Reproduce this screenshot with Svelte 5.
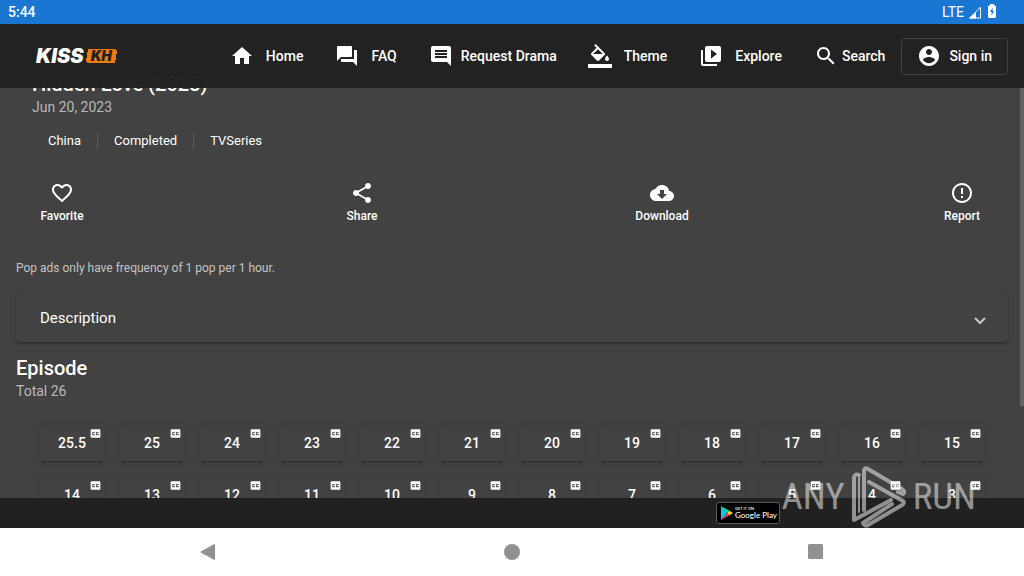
<script lang="ts">
  const navItems = [
    { label: 'Home', path: 'M10 20v-6h4v6h5v-8h3L12 3 2 12h3v8z' },
    {
      label: 'FAQ',
      path: 'M21 6h-2v9H6v2c0 .55.45 1 1 1h11l4 4V7c0-.55-.45-1-1-1zm-4 6V3c0-.55-.45-1-1-1H3c-.55 0-1 .45-1 1v14l4-4h10c.55 0 1-.45 1-1z'
    },
    {
      label: 'Request Drama',
      tight: true,
      path: 'M21.99 4c0-1.1-.89-2-1.99-2H4c-1.1 0-2 .9-2 2v12c0 1.1.9 2 2 2h14l4 4-.01-18zM18 14H6v-2h12v2zm0-3H6V9h12v2zm0-3H6V6h12v2z'
    },
    {
      label: 'Theme',
      path: 'M16.56 8.94L7.62 0 6.21 1.41l2.38 2.38-5.15 5.15c-.59.59-.59 1.54 0 2.12l5.5 5.5c.29.29.68.44 1.06.44s.77-.15 1.06-.44l5.5-5.5c.59-.58.59-1.53 0-2.12zM5.21 10L10 5.21 14.79 10H5.21zM19 11.5s-2 2.17-2 3.5c0 1.1.9 2 2 2s2-.9 2-2c0-1.33-2-3.5-2-3.5zM0 20h24v4H0z'
    },
    {
      label: 'Explore',
      path: 'M4 6H2v14c0 1.1.9 2 2 2h14v-2H4V6zm16-4H8c-1.1 0-2 .9-2 2v12c0 1.1.9 2 2 2h12c1.1 0 2-.9 2-2V4c0-1.1-.9-2-2-2zm-8 12.5v-9l6 4.5-6 4.5z'
    }
  ];

  const tags = ['China', 'Completed', 'TVSeries'];

  const actions = [
    {
      label: 'Favorite',
      path: 'M16.5 3c-1.74 0-3.41.81-4.5 2.09C10.91 3.81 9.24 3 7.5 3 4.42 3 2 5.42 2 8.5c0 3.78 3.4 6.86 8.55 11.54L12 21.35l1.45-1.32C18.6 15.36 22 12.28 22 8.5 22 5.42 19.58 3 16.5 3zm-4.4 15.55l-.1.1-.1-.1C7.14 14.24 4 11.39 4 8.5 4 6.5 5.5 5 7.5 5c1.54 0 3.04.99 3.57 2.36h1.87C13.46 5.99 14.96 5 16.5 5c2 0 3.5 1.5 3.5 3.5 0 2.89-3.14 5.74-7.9 10.05z'
    },
    {
      label: 'Share',
      path: 'M18 16.08c-.76 0-1.44.3-1.96.77L8.91 12.7c.05-.23.09-.46.09-.7s-.04-.47-.09-.7l7.05-4.11c.54.5 1.25.81 2.04.81 1.66 0 3-1.34 3-3s-1.34-3-3-3-3 1.34-3 3c0 .24.04.47.09.7L8.04 9.81C7.5 9.31 6.79 9 6 9c-1.66 0-3 1.34-3 3s1.34 3 3 3c.79 0 1.5-.31 2.04-.81l7.12 4.16c-.05.21-.08.43-.08.65 0 1.61 1.31 2.92 2.92 2.92s2.92-1.31 2.92-2.92-1.31-2.92-2.92-2.92z'
    },
    {
      label: 'Download',
      path: 'M19.35 10.04C18.67 6.59 15.64 4 12 4 9.11 4 6.6 5.64 5.35 8.04 2.34 8.36 0 10.91 0 14c0 3.31 2.69 6 6 6h13c2.76 0 5-2.24 5-5 0-2.64-2.05-4.78-4.65-4.96zM17 13l-5 5-5-5h3V9h4v4h3z'
    },
    {
      label: 'Report',
      path: 'M11 15h2v2h-2zm0-8h2v6h-2zm.99-5C6.47 2 2 6.48 2 12s4.47 10 9.99 10C17.52 22 22 17.52 22 12S17.52 2 11.99 2zM12 20c-4.42 0-8-3.58-8-8s3.58-8 8-8 8 3.58 8 8-3.58 8-8 8z'
    }
  ];

  const episodes = ['25.5', ...Array.from({ length: 25 }, (_, i) => String(25 - i))];
</script>

<div class="screen">
  <div class="status">
    <span class="clock">5:44</span>
    <div class="signals">
      <span>LTE</span>
      <svg width="14" height="13" viewBox="0 0 14 13">
        <path d="M12.500 1.200V12H1.700z" fill="none" stroke="#fff" />
        <path d="M1 12.500L8 6v6.500z" fill="#fff" />
      </svg>
      <svg class="battery" width="8" height="14" viewBox="0 0 8 14">
        <path d="M2 0h4v1.500h1q1 0 1 1V13q0 1-1 1H1q-1 0-1-1V2.500q0-1 1-1h1z" fill="#fff" />
        <path d="M4.600 3.500L2 8h1.600v3.500L6 7H4.600z" fill="#1976d2" />
      </svg>
    </div>
  </div>

  <header>
    <a class="logo" href="#home"><span>KISS</span><span class="kh"><span>KH</span></span></a>
    <nav>
      {#each navItems as item}
        <a href="#{item.label}" class:tight={item.tight}>
          <svg class="icon" viewBox="0 0 24 24"><path d={item.path} /></svg>
          {item.label}
        </a>
      {/each}
      <button class="search">
        <svg class="icon" viewBox="0 0 24 24"><path d="M15.5 14h-.79l-.28-.27C15.41 12.59 16 11.11 16 9.5 16 5.91 13.09 3 9.5 3S3 5.91 3 9.5 5.91 16 9.5 16c1.61 0 3.09-.59 4.23-1.57l.27.28v.79l5 4.99L20.49 19l-4.99-5zm-6 0C7.01 14 5 11.99 5 9.5S7.01 5 9.5 5 14 7.01 14 9.500 11.99 14 9.500 14z" /></svg>
        Search
      </button>
      <button class="sign-in">
        <svg class="icon" viewBox="0 0 24 24"><path d="M12 2C6.480 2 2 6.480 2 12s4.480 10 10 10 10-4.480 10-10S17.520 2 12 2zm0 3c1.660 0 3 1.340 3 3s-1.340 3-3 3-3-1.340-3-3 1.340-3 3-3zm0 14.200c-2.500 0-4.710-1.280-6-3.220.03-1.990 4-3.080 6-3.080 1.990 0 5.970 1.090 6 3.080-1.290 1.940-3.500 3.220-6 3.220z" /></svg>
        Sign in
      </button>
    </nav>
  </header>

  <main>
    <section class="info">
      <h1>Hidden Love (2023)</h1>
      <p class="sub">Jun 20, 2023</p>
      <ul class="tags">
        {#each tags as tag}
          <li>{tag}</li>
        {/each}
      </ul>
      <div class="actions">
        {#each actions as action}
          <button>
            <svg class="icon" viewBox="0 0 24 24"><path d={action.path} /></svg>
            {action.label}
          </button>
        {/each}
      </div>
    </section>

    <p class="notice">Pop ads only have frequency of 1 pop per 1 hour.</p>

    <button class="panel">
      Description
      <svg width="12" height="8" viewBox="0 0 12 8">
        <path d="M1 1l5 5 5-5" fill="none" stroke="#c6c6c6" stroke-width="2" />
      </svg>
    </button>

    <h2>Episode</h2>
    <p class="sub">Total 26</p>
    <div class="episodes">
      {#each episodes as episode}
        <button>
          {episode}
          <svg class="cc" viewBox="0 0 24 24"><path d="M19 4H5c-1.110 0-2 .9-2 2v12c0 1.100.89 2 2 2h14c1.100 0 2-.9 2-2V6c0-1.100-.9-2-2-2zm-8 7H9.500v-.5h-2v3h2V13H11v1c0 .55-.45 1-1 1H7c-.55 0-1-.45-1-1v-4c0-.55.45-1 1-1h3c.55 0 1 .45 1 1v1zm7 0h-1.500v-.5h-2v3h2V13H18v1c0 .55-.45 1-1 1h-3c-.55 0-1-.45-1-1v-4c0-.55.45-1 1-1h3c.55 0 1 .45 1 1v1z" /></svg>
        </button>
      {/each}
    </div>
    <div class="scrollbar"></div>
  </main>

  <footer>
    <a class="play" href="#play">
      <svg width="12" height="14" viewBox="0 0 12 14">
        <path d="M0 0v14l6-7z" fill="#00c8e8" />
        <path d="M0 0l8.500 4.800L6 7z" fill="#00e08a" />
        <path d="M8.500 4.800L12 7 8.500 9.200 6 7z" fill="#ffc928" />
        <path d="M0 14l8.500-4.800L6 7z" fill="#f4434f" />
      </svg>
      <span class="play-text"><small>GET IT ON</small><span>Google Play</span></span>
    </a>
  </footer>

  <div class="system-nav">
    <button aria-label="Back"><svg width="16" height="16" viewBox="0 0 16 16"><path d="M14.500.5v15L.8 8z" stroke="#919191" stroke-linejoin="round" /></svg></button>
    <button aria-label="Home"><svg width="16" height="16" viewBox="0 0 16 16"><circle cx="8" cy="8" r="8" /></svg></button>
    <button aria-label="Overview"><svg width="16" height="16" viewBox="0 0 16 16"><rect width="15" height="15" rx="1.500" /></svg></button>
  </div>

  <div class="watermark">
    <span>ANY</span>
    <svg width="54" height="62" viewBox="0 0 54 62" fill="none" stroke="#fff" stroke-width="4" stroke-linejoin="round" stroke-linecap="round">
      <path d="M7 9Q2 7 2 13V54L39 34" />
      <path d="M7 9V46" stroke-width="2" />
      <path d="M12 44V5Q12 1 16 3L50 23Q54 26 51 28L46 26" />
      <path d="M17 16L51 35Q53 37 50 39L16 59Q13 61 11 57L40 38" />
    </svg>
    <span>RUN</span>
  </div>
</div>

<style>
  :global(body) {
    margin: 0;
    background: #424242;
  }

  .screen {
    position: relative;
    display: flex;
    flex-direction: column;
    height: 100vh;
    overflow: hidden;
    background: #424242;
    color: #fff;
    font-family: Roboto, sans-serif;
    font-size: 14px;
  }

  button {
    margin: 0;
    padding: 0;
    border: 0;
    background: none;
    color: inherit;
    font: inherit;
    cursor: pointer;
  }

  a {
    color: inherit;
    text-decoration: none;
  }

  h1,
  h2,
  p,
  ul {
    margin: 0;
    padding: 0;
  }

  .icon {
    width: 24px;
    height: 24px;
    fill: currentColor;
    flex-shrink: 0;
  }

  .status {
    display: flex;
    justify-content: space-between;
    align-items: center;
    height: 24px;
    padding: 0 28px 0 8px;
    background: #1976d2;
    flex-shrink: 0;
    z-index: 2;
  }

  .clock {
    font-weight: 500;
  }

  .signals {
    display: flex;
    align-items: center;
    gap: 4px;
  }

  .battery {
    margin: 0 0 2px 2px;
  }

  header {
    display: flex;
    align-items: center;
    justify-content: space-between;
    height: 64px;
    padding: 0 16px 0 36px;
    background: rgba(33, 33, 33, 0.99);
    flex-shrink: 0;
    z-index: 2;
  }

  .logo {
    display: flex;
    align-items: center;
    font: italic 900 20px/14px Inter, sans-serif;
  }

  .kh {
    margin-left: 2px;
    padding: 0 5px;
    border-radius: 3px;
    background: linear-gradient(100deg, transparent 2px, #ee7a12 2px, #ee7a12 calc(100% - 2px), transparent 0);
    color: #222;
    font-size: 14px;
  }

  nav {
    display: flex;
    align-items: center;
    font-weight: 500;
    white-space: nowrap;
  }

  nav a,
  nav button {
    display: flex;
    align-items: center;
    gap: 12px;
    padding: 0 16px;
  }

  nav .tight {
    gap: 8px;
    padding-right: 15px;
  }

  nav .search {
    gap: 4px;
  }

  nav .sign-in {
    gap: 8px;
    height: 37px;
    padding: 0 15px;
    border: 1px solid #414141;
    border-radius: 4px;
  }

  main {
    position: relative;
    flex: 1;
    min-height: 0;
    margin-top: -16px;
    padding: 0 16px;
    overflow: hidden;
  }

  .info {
    padding: 0 16px;
  }

  h1,
  h2 {
    font-size: 20px;
    font-weight: 500;
    line-height: 25px;
  }

  .sub {
    color: #b9b9b9;
    line-height: 20px;
  }

  .tags {
    display: flex;
    margin-top: 16px;
    list-style: none;
    font-size: 13px;
    line-height: 16px;
  }

  .tags li {
    padding: 0 16px;
  }

  .tags li + li {
    border-left: 1px solid #5c5c5c;
  }

  .actions {
    display: flex;
    justify-content: space-between;
    margin-top: 32px;
  }

  .actions button {
    display: flex;
    flex-direction: column;
    align-items: center;
    gap: 4px;
    width: 60px;
    font-size: 12px;
    font-weight: 500;
    line-height: 14px;
  }

  .notice {
    margin-top: 36px;
    color: #c4c4c4;
    font-size: 12px;
    line-height: 18px;
  }

  .panel {
    display: flex;
    align-items: center;
    justify-content: space-between;
    width: 100%;
    height: 48px;
    margin: 17px 0 14px;
    padding: 0 22px 0 24px;
    border-radius: 4px;
    box-shadow: 0 2px 2px -1px rgba(0, 0, 0, 0.4), 0 1px 4px rgba(0, 0, 0, 0.12);
    font-size: 15px;
  }

  .panel svg {
    margin-top: 6px;
  }

  .episodes {
    display: grid;
    grid-template-columns: repeat(auto-fill, 64px);
    gap: 16px;
    padding: 24px 24px 0;
  }

  .episodes button {
    position: relative;
    height: 36px;
    border-radius: 4px;
    box-shadow: 0 3px 2px -2px rgba(0, 0, 0, 0.35), 0 1px 4px rgba(0, 0, 0, 0.12);
    font-weight: 500;
  }

  .cc {
    position: absolute;
    top: 2px;
    right: 2px;
    width: 13px;
    height: 13px;
    fill: #fff;
  }

  .scrollbar {
    position: absolute;
    top: 0;
    right: 0;
    width: 4px;
    height: 334px;
    background: #636363;
  }

  footer {
    display: flex;
    justify-content: flex-end;
    align-items: center;
    height: 30px;
    padding-right: 244px;
    background: #212121;
    flex-shrink: 0;
  }

  .play {
    display: flex;
    align-items: center;
    gap: 2px;
    box-sizing: border-box;
    width: 64px;
    height: 22px;
    padding-left: 4px;
    border: 1px solid #5a5a5a;
    border-radius: 3px;
    background: #000;
    font-family: Lato, sans-serif;
  }

  .play-text {
    display: flex;
    flex-direction: column;
    font-size: 8px;
    font-weight: 500;
    line-height: 9px;
    white-space: nowrap;
  }

  .play-text small {
    font-size: 4px;
    line-height: 5px;
  }

  .system-nav {
    display: flex;
    justify-content: space-between;
    height: 48px;
    padding: 0 18%;
    background: #fff;
    flex-shrink: 0;
  }

  .system-nav button {
    display: flex;
    align-items: center;
    justify-content: center;
    width: 48px;
    fill: #919191;
  }

  .watermark {
    position: absolute;
    right: 48px;
    bottom: 48px;
    display: flex;
    align-items: center;
    gap: 7px;
    opacity: 0.5;
    font: 37px/62px "Liberation Sans Narrow", "Roboto Condensed", sans-serif;
    pointer-events: none;
  }
</style>
